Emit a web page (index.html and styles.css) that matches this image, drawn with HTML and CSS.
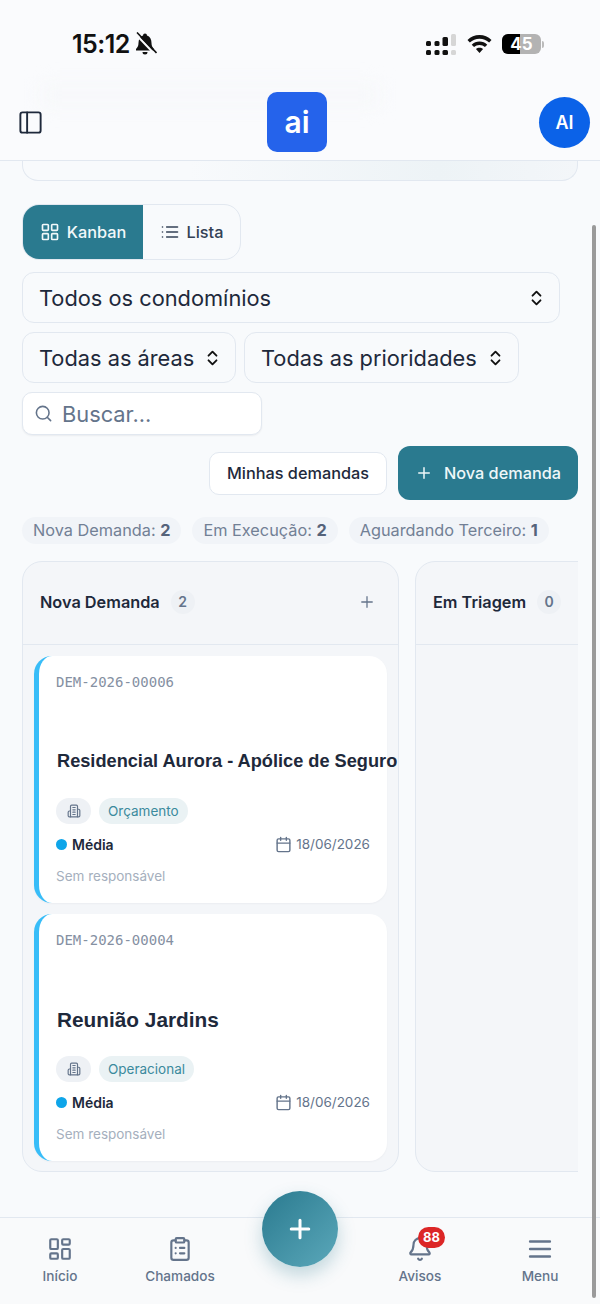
FILE: index.html
```html
<!DOCTYPE html>
<html lang="pt-BR">
<head>
    <meta charset="UTF-8">
    <meta name="viewport" content="width=device-width, initial-scale=1.0">
    <title>Demandas</title>
    <link rel="stylesheet" href="styles.css">
</head>
<body>
    <svg class="sprite" aria-hidden="true">
        <symbol id="i-panel" viewBox="0 0 24 24"><rect width="18" height="18" x="3" y="3" rx="2"/><path d="M9 3v18"/></symbol>
        <symbol id="i-grid" viewBox="0 0 24 24"><rect width="7" height="7" x="3" y="3" rx="1"/><rect width="7" height="7" x="14" y="3" rx="1"/><rect width="7" height="7" x="14" y="14" rx="1"/><rect width="7" height="7" x="3" y="14" rx="1"/></symbol>
        <symbol id="i-dash" viewBox="0 0 24 24"><rect width="7" height="9" x="3" y="3" rx="1"/><rect width="7" height="5" x="14" y="3" rx="1"/><rect width="7" height="9" x="14" y="12" rx="1"/><rect width="7" height="5" x="3" y="16" rx="1"/></symbol>
        <symbol id="i-list" viewBox="0 0 24 24"><path d="M3 12h.01M3 18h.01M3 6h.01M8 12h13M8 18h13M8 6h13"/></symbol>
        <symbol id="i-updown" viewBox="0 0 24 24"><path d="m7 15 5 5 5-5M7 9l5-5 5 5"/></symbol>
        <symbol id="i-search" viewBox="0 0 24 24"><circle cx="11" cy="11" r="8"/><path d="m21 21-4.3-4.3"/></symbol>
        <symbol id="i-plus" viewBox="0 0 24 24"><path d="M5 12h14M12 5v14"/></symbol>
        <symbol id="i-cal" viewBox="0 0 24 24"><path d="M8 2v4M16 2v4M3 10h18"/><rect width="18" height="18" x="3" y="4" rx="2"/></symbol>
        <symbol id="i-building" viewBox="0 0 24 24"><path d="M6 22V4a2 2 0 0 1 2-2h8a2 2 0 0 1 2 2v18Z"/><path d="M6 12H4a2 2 0 0 0-2 2v6a2 2 0 0 0 2 2h2M18 9h2a2 2 0 0 1 2 2v9a2 2 0 0 1-2 2h-2M10 6h4M10 10h4M10 14h4M10 18h4"/></symbol>
        <symbol id="i-clip" viewBox="0 0 24 24"><rect width="8" height="4" x="8" y="2" rx="1"/><path d="M16 4h2a2 2 0 0 1 2 2v14a2 2 0 0 1-2 2H6a2 2 0 0 1-2-2V6a2 2 0 0 1 2-2h2M12 11h4M12 16h4M8 11h.01M8 16h.01"/></symbol>
        <symbol id="i-bell" viewBox="0 0 24 24"><path d="M10.268 21a2 2 0 0 0 3.464 0"/><path d="M3.262 15.326A1 1 0 0 0 4 17h16a1 1 0 0 0 .74-1.673C19.41 13.956 18 12.499 18 8A6 6 0 0 0 6 8c0 4.499-1.411 5.956-2.738 7.326"/></symbol>
        <symbol id="i-menu" viewBox="1.500 1.500 21 21"><path d="M4 6h16M4 12h16M4 18h16"/></symbol>
    </svg>

    <div class="status-bar">
        <div class="status-left">
            <span class="status-time">15:12</span>
            <svg class="status-bell" viewBox="0 0 24 24">
                <path d="M12 1.500a2 2 0 0 0-2 2C7 4.500 5.500 7.500 5.500 11c0 3-1 4.500-2.500 6v1.500h18V17c-1.500-1.500-2.500-3-2.500-6 0-3.500-1.500-6.500-4.500-7.500a2 2 0 0 0-2-2ZM9.500 20a2.500 2.500 0 0 0 5 0Z"/>
                <path class="status-slash" d="M2.500 2l19 20"/>
                <path class="status-slash-dark" d="M4 .5l19.500 20.500"/>
            </svg>
        </div>
        <div class="status-right">
            <svg class="status-signal" viewBox="0 0 30 21">
                <rect x="0" y="7" width="5" height="5" rx="1.500"/><rect x="0" y="16" width="5" height="5" rx="1.500"/>
                <rect x="8.500" y="7" width="5" height="5" rx="1.500"/><rect x="8.500" y="16" width="5" height="5" rx="1.500"/>
                <rect x="16.500" y="3" width="5.500" height="9" rx="1.500"/><rect x="16.500" y="16" width="5.500" height="5" rx="1.500"/>
                <rect class="signal-off" x="25" y="0" width="5" height="12" rx="1.500"/><rect class="signal-off" x="25" y="16" width="5" height="5" rx="1.500"/>
            </svg>
            <svg class="status-wifi" viewBox="0 0 24 18">
                <path d="M12 1C7.800 1 4.200 2.600 1.200 5.400l2.100 2.300C5.700 5.500 8.700 4.200 12 4.200s6.300 1.300 8.700 3.500l2.100-2.300C19.800 2.600 16.200 1 12 1Zm0 5.800c-2.700 0-5.100 1-7 2.800l2.100 2.200c1.300-1.200 3-1.900 4.900-1.900s3.600.7 4.900 1.900L19 9.600c-1.900-1.800-4.300-2.800-7-2.800Zm0 5.600c-1.200 0-2.300.5-3.200 1.200l3.200 3.600 3.200-3.600c-.9-.7-2-1.200-3.200-1.200Z"/>
            </svg>
            <div class="battery">
                <span class="battery-fill"></span>
                <span class="battery-text">45</span>
            </div>
            <span class="battery-tip"></span>
        </div>
    </div>

    <header class="top-bar">
        <div class="top-blur"></div>
        <svg class="icon top-panel"><use href="#i-panel"/></svg>
        <div class="logo">ai</div>
        <div class="avatar">AI</div>
    </header>

    <main class="content">
        <div class="hero-rest"></div>

        <div class="view-tabs">
            <div class="view-tab view-tab-active"><svg class="icon icon-20"><use href="#i-grid"/></svg>Kanban</div>
            <div class="view-tab"><svg class="icon icon-20"><use href="#i-list"/></svg>Lista</div>
        </div>

        <div class="select select-wide"><span>Todos os condomínios</span><svg class="icon select-arrow"><use href="#i-updown"/></svg></div>

        <div class="select-row">
            <div class="select select-areas"><span>Todas as áreas</span><svg class="icon select-arrow"><use href="#i-updown"/></svg></div>
            <div class="select select-prio"><span>Todas as prioridades</span><svg class="icon select-arrow"><use href="#i-updown"/></svg></div>
        </div>

        <div class="search"><svg class="icon search-icon"><use href="#i-search"/></svg><span>Buscar...</span></div>

        <div class="actions">
            <div class="btn-outline">Minhas demandas</div>
            <div class="btn-primary"><svg class="icon icon-18"><use href="#i-plus"/></svg>Nova demanda</div>
        </div>

        <div class="chips">
            <span class="chip">Nova Demanda: <b>2</b></span>
            <span class="chip">Em Execução: <b>2</b></span>
            <span class="chip">Aguardando Terceiro: <b>1</b></span>
        </div>

        <div class="board">
            <section class="column">
                <div class="column-head">
                    <span class="column-title">Nova Demanda</span>
                    <span class="column-count">2</span>
                    <svg class="icon column-add"><use href="#i-plus"/></svg>
                </div>
                <div class="column-body">
                    <article class="card">
                        <div class="card-code">DEM-2026-00006</div>
                        <div class="card-title card-title-long">Residencial Aurora - Apólice de Seguro</div>
                        <div class="card-tags">
                            <span class="tag tag-icon"><svg class="icon icon-14"><use href="#i-building"/></svg></span>
                            <span class="tag">Orçamento</span>
                        </div>
                        <div class="card-meta">
                            <span class="prio"><i class="prio-dot"></i>Média</span>
                            <span class="date"><svg class="icon icon-17"><use href="#i-cal"/></svg>18/06/2026</span>
                        </div>
                        <div class="card-owner">Sem responsável</div>
                    </article>
                    <article class="card">
                        <div class="card-code">DEM-2026-00004</div>
                        <div class="card-title">Reunião Jardins</div>
                        <div class="card-tags">
                            <span class="tag tag-icon"><svg class="icon icon-14"><use href="#i-building"/></svg></span>
                            <span class="tag">Operacional</span>
                        </div>
                        <div class="card-meta">
                            <span class="prio"><i class="prio-dot"></i>Média</span>
                            <span class="date"><svg class="icon icon-17"><use href="#i-cal"/></svg>18/06/2026</span>
                        </div>
                        <div class="card-owner">Sem responsável</div>
                    </article>
                </div>
            </section>
            <section class="column">
                <div class="column-head">
                    <span class="column-title">Em Triagem</span>
                    <span class="column-count">0</span>
                </div>
            </section>
        </div>
    </main>

    <nav class="bottom-nav">
        <div class="nav-item"><svg class="icon nav-icon"><use href="#i-dash"/></svg>Início</div>
        <div class="nav-item"><svg class="icon nav-icon"><use href="#i-clip"/></svg>Chamados</div>
        <div class="nav-item"></div>
        <div class="nav-item">
            <div class="nav-bell"><svg class="icon nav-icon"><use href="#i-bell"/></svg><span class="nav-badge">88</span></div>
            Avisos
        </div>
        <div class="nav-item"><svg class="icon nav-icon"><use href="#i-menu"/></svg>Menu</div>
    </nav>

    <div class="fab"><svg class="icon fab-icon"><use href="#i-plus"/></svg></div>
    <div class="scroll-thumb"></div>
</body>
</html>
```

FILE: styles.css
```css
* {
    box-sizing: border-box;
}
body {
    margin: 0;
    width: 600px;
    height: 1304px;
    overflow: hidden;
    position: relative;
    display: flex;
    flex-direction: column;
    background: #f8fafc;
    color: #1e293b;
    font-family: Inter, "Noto Sans", sans-serif;
}
.sprite {
    display: none;
}
.icon {
    display: block;
    flex: none;
    fill: none;
    stroke: currentColor;
    stroke-width: 2;
    stroke-linecap: round;
    stroke-linejoin: round;
}
.icon-14 { width: 14px; height: 14px; }
.icon-17 { width: 17px; height: 17px; }
.icon-18 { width: 18px; height: 18px; }
.icon-20 { width: 20px; height: 20px; }

/* status bar */
.status-bar {
    height: 84px;
    flex: none;
    display: flex;
    justify-content: space-between;
    padding: 29px 56px 0 72px;
    background: #fafbfd;
    color: #111;
}
.status-left {
    display: flex;
    align-items: center;
    gap: 3px;
    height: 30px;
}
.status-time {
    font-size: 25px;
    font-weight: 600;
    letter-spacing: -0.5px;
}
.status-bell {
    width: 24px;
    height: 24px;
    fill: #111;
}
.status-slash {
    stroke: #fafbfd;
    stroke-width: 2;
}
.status-slash-dark {
    stroke: #111;
    stroke-width: 1.600;
}
.status-right {
    display: flex;
    align-items: center;
    height: 30px;
}
.status-signal {
    width: 30px;
    height: 21px;
    fill: #111;
    margin-right: 10px;
}
.signal-off {
    fill: #d6d6d6;
}
.status-wifi {
    width: 27px;
    height: 20px;
    fill: #111;
    margin-right: 9px;
}
.battery {
    width: 39px;
    height: 20px;
    border-radius: 6px;
    background: #b3b3b3;
    position: relative;
    overflow: hidden;
    display: flex;
    align-items: center;
    justify-content: center;
}
.battery-fill {
    position: absolute;
    left: 0;
    top: 0;
    bottom: 0;
    width: 18px;
    background: #000;
}
.battery-text {
    position: relative;
    color: #fff;
    font-size: 17px;
    font-weight: 700;
}
.battery-tip {
    width: 2px;
    height: 7px;
    margin-left: 1px;
    border-radius: 0 2px 2px 0;
    background: #bbb;
}

/* header */
.top-bar {
    height: 77px;
    flex: none;
    position: relative;
    display: flex;
    align-items: center;
    justify-content: space-between;
    padding: 0 10px 0 17px;
    background: #fafbfd;
    border-bottom: 1px solid #e2e8f0;
}
.top-blur {
    position: absolute;
    left: 40px;
    top: 0;
    width: 340px;
    height: 22px;
    background: #f7f8fa;
    filter: blur(9px);
}
.top-panel {
    width: 27px;
    height: 27px;
    margin-top: 1px;
    color: #1e293b;
    stroke-width: 1.700;
    position: relative;
}
.logo {
    position: absolute;
    left: 267px;
    top: 8px;
    width: 60px;
    height: 60px;
    border-radius: 10px;
    background: #2563eb;
    color: #fff;
    font-size: 30px;
    font-weight: 600;
    display: flex;
    align-items: center;
    justify-content: center;
}
.avatar {
    width: 51px;
    height: 51px;
    margin-top: 1px;
    border-radius: 50%;
    background: #0b62e8;
    color: #fff;
    font-size: 18px;
    font-weight: 600;
    display: flex;
    align-items: center;
    justify-content: center;
}

/* filters */
.content {
    flex: 1;
    padding: 0 22px;
    min-height: 0;
}
.hero-rest {
    height: 20px;
    border: 1px solid #e2e8f0;
    border-top: 0;
    border-radius: 0 0 16px 16px;
    background: linear-gradient(90deg, #f8fafc 30%, #edf3f6 75%, #f3f6f9);
}
.view-tabs {
    display: flex;
    width: 219px;
    height: 56px;
    margin-top: 23px;
    border: 1px solid #e2e8f0;
    border-radius: 17px;
    overflow: hidden;
}
.view-tab {
    display: flex;
    align-items: center;
    justify-content: center;
    gap: 7px;
    flex: 1;
    padding-bottom: 1px;
    font-size: 16.300px;
    font-weight: 500;
    color: #334155;
}
.view-tab-active {
    flex: none;
    width: 120px;
    background: #2a7a8f;
    color: #f1f8fa;
}
.select {
    display: flex;
    align-items: center;
    justify-content: space-between;
    height: 51px;
    padding: 0 13px 0 16px;
    border: 1px solid #e2e8f0;
    border-radius: 12px;
    font-size: 21.800px;
    color: #1e293b;
}
.select-wide {
    width: 538px;
    margin-top: 12px;
}
.select-row {
    display: flex;
    gap: 8px;
    margin-top: 9px;
}
.select-areas { width: 214px; }
.select-prio { width: 275px; }
.select-arrow {
    width: 19px;
    height: 24px;
    color: #111;
    stroke-width: 2.400;
}
.search {
    display: flex;
    align-items: center;
    gap: 9px;
    width: 240px;
    height: 43px;
    margin-top: 9px;
    padding-left: 11px;
    background: #fff;
    border: 1px solid #e2e8f0;
    border-radius: 10px;
    box-shadow: 0 1px 2px rgba(15, 23, 42, 0.06);
    font-size: 21.800px;
    color: #64748b;
}
.search-icon {
    width: 19px;
    height: 19px;
}
.actions {
    display: flex;
    align-items: center;
    justify-content: flex-end;
    gap: 11px;
    height: 54px;
    margin-top: 11px;
}
.btn-outline {
    display: flex;
    align-items: center;
    justify-content: center;
    width: 178px;
    height: 43px;
    background: #fff;
    border: 1px solid #e2e8f0;
    border-radius: 10px;
    font-size: 16.300px;
    font-weight: 500;
    color: #1e293b;
}
.btn-primary {
    display: flex;
    align-items: center;
    justify-content: center;
    gap: 11px;
    width: 180px;
    height: 54px;
    background: #2a7a8f;
    border-radius: 12px;
    font-size: 16.300px;
    font-weight: 500;
    color: #eef7f9;
}
.chips {
    display: flex;
    gap: 11px;
    margin-top: 17px;
}
.chip {
    height: 27px;
    padding: 0 11px;
    border-radius: 14px;
    background: #f1f4f8;
    font-size: 16.300px;
    line-height: 27px;
    color: #728095;
    white-space: nowrap;
}
.chip b {
    font-weight: 700;
    color: #55637a;
}

/* board */
.board {
    display: flex;
    gap: 16px;
    height: 611px;
    margin-top: 17px;
    overflow: hidden;
}
.column {
    flex: none;
    width: 377px;
    background: #f4f6f9;
    border: 1px solid #e2e8f0;
    border-radius: 20px;
}
.column-head {
    display: flex;
    align-items: center;
    height: 83px;
    padding: 0 22px 2px 17px;
    border-bottom: 1px solid #e2e8f0;
}
.column-title {
    font-size: 16.300px;
    font-weight: 600;
    color: #1e293b;
}
.column-count {
    width: 24px;
    height: 24px;
    margin-left: 11px;
    border-radius: 50%;
    background: #eef1f5;
    font-size: 14px;
    font-weight: 600;
    line-height: 24px;
    text-align: center;
    color: #64748b;
}
.column-add {
    width: 18px;
    height: 18px;
    margin-left: auto;
    color: #64748b;
    stroke-width: 1.700;
}
.column-body {
    display: flex;
    flex-direction: column;
    gap: 11px;
    padding: 11px 11px 0;
}
.card {
    height: 247px;
    padding: 17px 17px 0 17px;
    background: #fff;
    border-left: 5px solid #38bdf8;
    border-radius: 18px;
    box-shadow: 0 1px 2px rgba(15, 23, 42, 0.04);
}
.card-code {
    height: 20px;
    font-family: "DejaVu Sans Mono", monospace;
    font-size: 14px;
    line-height: 19px;
    color: #8590a2;
}
.card-title {
    height: 56px;
    margin-top: 41px;
    font-family: "Liberation Sans", Arial, sans-serif;
    font-size: 20.800px;
    font-weight: 700;
    line-height: 55px;
    white-space: nowrap;
    padding-left: 1px;
    color: #1e293b;
}
.card-title-long {
    font-size: 18.200px;
}
.card-tags {
    display: flex;
    gap: 8px;
    margin-top: 8px;
}
.tag {
    height: 26px;
    padding: 0 9px;
    border-radius: 13px;
    background: #eaf2f4;
    font-size: 13.500px;
    line-height: 26px;
    color: #3b8a9d;
}
.tag-icon {
    display: flex;
    align-items: center;
    justify-content: center;
    width: 35px;
    padding: 0;
    background: #eef1f5;
    color: #64748b;
}
.card-meta {
    display: flex;
    align-items: center;
    justify-content: space-between;
    height: 20px;
    margin-top: 10px;
}
.prio {
    display: flex;
    align-items: center;
    gap: 5px;
    font-size: 14px;
    font-weight: 600;
    color: #1e293b;
}
.prio-dot {
    width: 11px;
    height: 11px;
    border-radius: 50%;
    background: #0ea5e9;
}
.date {
    display: flex;
    align-items: center;
    gap: 4px;
    font-size: 13.500px;
    color: #64748b;
}
.card-owner {
    margin-top: 14px;
    font-size: 13.500px;
    line-height: 17px;
    color: #a5afbd;
}

/* bottom nav */
.bottom-nav {
    height: 87px;
    flex: none;
    display: grid;
    grid-template-columns: repeat(5, 1fr);
    padding-top: 18px;
    background: #f9fafb;
    border-top: 1px solid #e2e8f0;
}
.nav-item {
    display: flex;
    flex-direction: column;
    align-items: center;
    gap: 6px;
    font-size: 13.600px;
    font-weight: 500;
    line-height: 17px;
    color: #64748b;
}
.nav-icon {
    width: 26px;
    height: 26px;
}
.nav-bell {
    position: relative;
}
.nav-badge {
    position: absolute;
    left: 11px;
    top: -9px;
    width: 27px;
    height: 21px;
    border-radius: 11px;
    background: #dc2626;
    color: #fff;
    font-size: 13px;
    font-weight: 700;
    line-height: 21px;
    text-align: center;
}
.fab {
    position: absolute;
    left: 262px;
    top: 1191px;
    width: 76px;
    height: 76px;
    border-radius: 50%;
    background: linear-gradient(135deg, #2a7a8f, #5ba8ba);
    box-shadow: 0 8px 18px rgba(42, 122, 143, 0.28);
    display: flex;
    align-items: center;
    justify-content: center;
    color: #fff;
}
.fab-icon {
    width: 30px;
    height: 30px;
    stroke-width: 2.400;
}
.scroll-thumb {
    position: absolute;
    left: 592px;
    top: 225px;
    width: 4px;
    height: 1073px;
    border-radius: 2px;
    background: #9a9a9a;
}
```
